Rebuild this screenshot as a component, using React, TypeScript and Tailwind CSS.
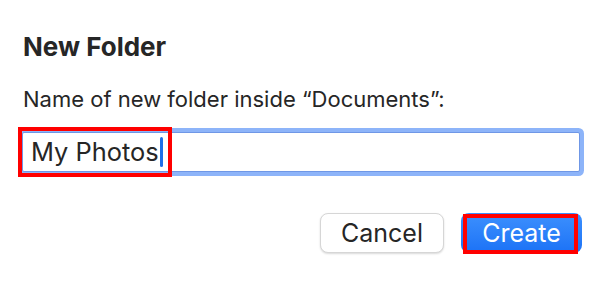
import React from "react";

const App: React.FC = () => {
  return (
    <div className="relative w-[604px] h-[282px] bg-white pt-[31px] px-[22px] text-[#262626] font-['Inter','Liberation_Sans',sans-serif]">
      <div className="ml-[1px] text-[26px] leading-[32px] font-bold">New Folder</div>
      <div className="ml-[1px] mt-[22px] text-[22px] leading-[28px]">
        Name of new folder inside “Documents”:
      </div>

      {/* text field with focus ring */}
      <div className="relative mt-[19px] h-[40px] w-[558px] rounded-[2px] border border-[#6f97e6] bg-white shadow-[0_0_0_4px_#8db4f9] flex items-center pl-[8px]">
        <span className="text-[25.4px] leading-[30px]">My Photos</span>
        <span className="ml-[1px] inline-block h-[30px] w-[3px] rounded-full bg-[#1e6fe8]" />
      </div>

      <div className="mt-[41px] flex justify-end gap-[17px]">
        <button className="h-[40px] w-[124px] rounded-[8px] border border-[#d6d6d6] bg-white text-[25px] leading-none shadow-[0_1px_2px_rgba(0,0,0,0.15)]">
          Cancel
        </button>
        <button className="h-[40px] w-[121px] rounded-[8px] bg-gradient-to-b from-[#3d90fd] to-[#1b72f6] text-[25px] leading-none text-white">
          Create
        </button>
      </div>

      {/* annotation boxes */}
      <div className="absolute left-[18px] top-[127px] h-[50px] w-[154px] border-[4px] border-[#ff0000]" />
      <div className="absolute left-[463px] top-[214px] h-[40px] w-[115px] border-[4px] border-[#ff0000]" />
    </div>
  );
};

export default App;
